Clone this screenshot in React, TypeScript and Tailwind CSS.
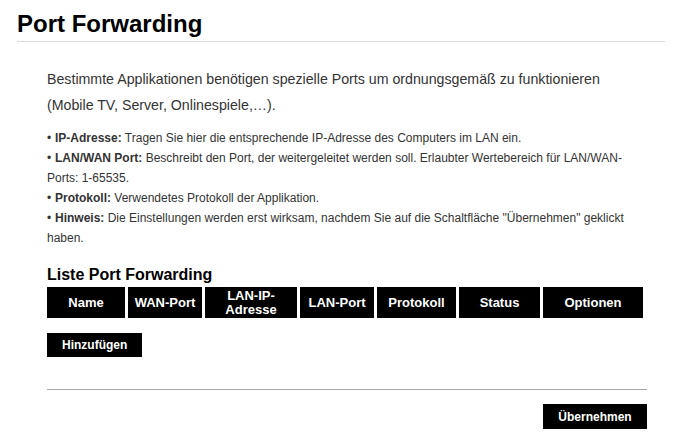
import React from "react";

const cols = [
  { label: "Name", w: "w-[78px]" },
  { label: "WAN-Port", w: "w-[74px]" },
  { label: "LAN-IP-Adresse", w: "w-[92px]" },
  { label: "LAN-Port", w: "w-[74px]" },
  { label: "Protokoll", w: "w-[79px]" },
  { label: "Status", w: "w-[81px]" },
  { label: "Optionen", w: "w-[100px]" },
];

const bullets: { b: string; t: string }[] = [
  { b: "IP-Adresse:", t: " Tragen Sie hier die entsprechende IP-Adresse des Computers im LAN ein." },
  {
    b: "LAN/WAN Port:",
    t: " Beschreibt den Port, der weitergeleitet werden soll. Erlaubter Wertebereich für LAN/WAN-Ports: 1-65535.",
  },
  { b: "Protokoll:", t: " Verwendetes Protokoll der Applikation." },
  {
    b: "Hinweis:",
    t: ' Die Einstellungen werden erst wirksam, nachdem Sie auf die Schaltfläche "Übernehmen" geklickt haben.',
  },
];

export default function App() {
  return (
    <div className="w-[690px] h-[437px] bg-white overflow-hidden font-['Liberation_Sans',Arial,sans-serif] text-[#333]">
      <div className="pt-[10px] pl-[17px] w-[665px]">
        <h1 className="text-[24px] leading-[28px] font-bold text-black pb-[3px] border-b border-[#dddddd]">
          Port Forwarding
        </h1>
      </div>
      <div className="ml-[47px] w-[600px]">
        <p className="mt-[24px] text-[14.2px] leading-[26px] whitespace-nowrap">
          Bestimmte Applikationen benötigen spezielle Ports um ordnungsgemäß zu funktionieren
          <br />
          (Mobile TV, Server, Onlinespiele,…).
        </p>
        <div className="mt-[10px] text-[12px] leading-[20px]">
          {bullets.map((x) => (
            <div key={x.b}>
              <span className="inline-block w-[8px]">•</span>
              <b>{x.b}</b>
              {x.t}
            </div>
          ))}
        </div>
        <h2 className="mt-[18px] text-[16px] leading-[18px] font-bold text-black">Liste Port Forwarding</h2>
        <div className="mt-[3px] flex gap-[3px]">
          {cols.map((c) => (
            <div
              key={c.label}
              className={`${c.w} h-[31px] bg-black text-white text-[13px] leading-[14px] font-bold flex items-center justify-center text-center px-[4px]`}
            >
              {c.label}
            </div>
          ))}
        </div>
        <button className="mt-[15px] h-[24px] px-[15px] bg-black text-white text-[12px] font-bold">Hinzufügen</button>
        <div className="mt-[32px] border-t border-[#a8a8a8]" />
        <div className="mt-[14px] flex justify-end">
          <button className="h-[25px] w-[104px] bg-black text-white text-[12px] font-bold">Übernehmen</button>
        </div>
      </div>
    </div>
  );
}
